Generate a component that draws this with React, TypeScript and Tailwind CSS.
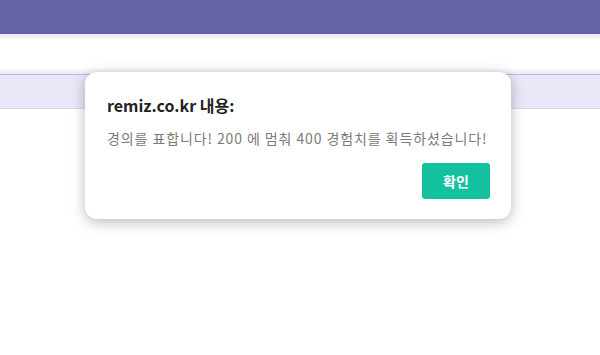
export default function App() {
  return (
    <div className="relative h-[355px] w-[600px] overflow-hidden bg-white font-['Noto_Sans_CJK_KR','Noto_Sans',sans-serif]">
      {/* page behind the alert */}
      <div className="h-[34px] bg-[#6562a8]" />
      <div className="h-[5px] bg-gradient-to-b from-[#eceaf6] to-[#f7f6fc]" />
      <div className="h-[30px] bg-white" />
      <div className="h-[5px] bg-gradient-to-b from-[#fafafc] to-[#ececf3]" />
      <div className="h-[35px] border-t border-b border-t-[#b9b5dc] border-b-[#d9d7ec] bg-[#e9e7f8]" />

      {/* alert dialog */}
      <div className="absolute left-[85px] top-[72px] flex h-[147px] w-[426px] flex-col rounded-[12px] bg-white pl-[22px] pr-[21px] pt-[21px] shadow-[0_3px_14px_rgba(0,0,0,0.28)]">
        <h1 className="text-[16px] font-bold leading-[24px] text-[#222]">remiz.co.kr 내용:</h1>
        <p className="mt-[11px] whitespace-nowrap text-[14px] leading-[20px] tracking-[0.9px] text-[#7a7a7a]">
          경의를 표합니다! 200 에 멈춰 400 경험치를 획득하셨습니다!
        </p>
        <div className="mt-[15px] flex justify-end">
          <button className="h-[36px] w-[68px] rounded-[3px] bg-[#14c19f] text-[14px] font-bold text-white">
            확인
          </button>
        </div>
      </div>
    </div>
  );
}
